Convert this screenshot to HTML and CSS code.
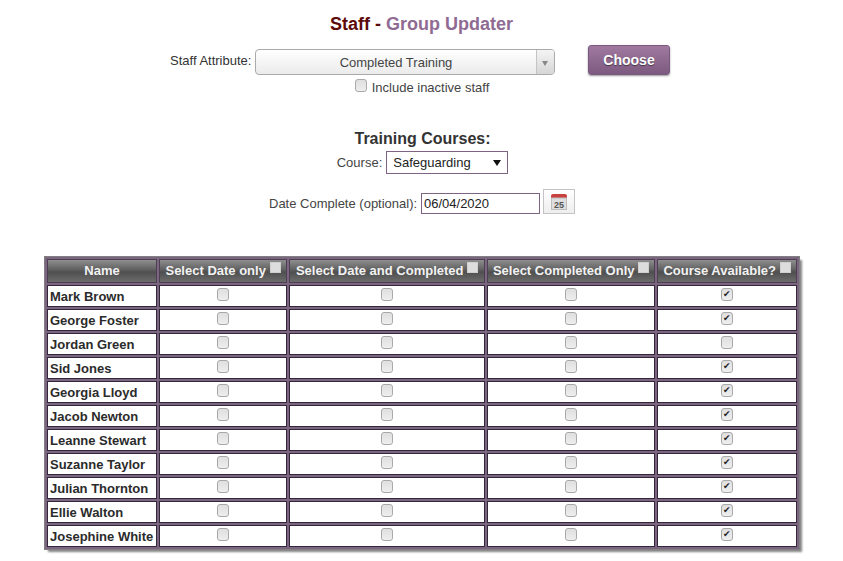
FILE: index.html
```html
<!DOCTYPE html>
<html lang="en">
<head>
    <meta charset="UTF-8">
    <meta name="viewport" content="width=device-width, initial-scale=1.0">
    <title>Staff - Group Updater</title>
    <link rel="stylesheet" href="styles.css">
</head>
<body>
    <h1 class="page-title"><span class="title-dark">Staff - </span><span class="title-light">Group Updater</span></h1>

    <div class="attribute-row">
        <label class="attribute-label">Staff Attribute:</label>
        <div class="combo">
            <span class="combo-text">Completed Training</span>
            <span class="combo-arrow"></span>
        </div>
        <button class="choose-btn">Choose</button>
    </div>
    <div class="inactive-row">
        <input type="checkbox" class="check">
        <span>Include inactive staff</span>
    </div>

    <h2 class="section-title">Training Courses:</h2>
    <div class="course-row">
        <label>Course:</label>
        <div class="course-select">
            <span>Safeguarding</span>
            <span class="course-arrow"></span>
        </div>
    </div>
    <div class="date-row">
        <label>Date Complete (optional):</label>
        <input type="text" class="date-input" value="06/04/2020">
        <button class="cal-btn">
            <svg width="16" height="17" viewBox="0 0 16 17">
                <path d="M0 3a2 2 0 0 1 2-2h12a2 2 0 0 1 2 2v2H0z" fill="#c9413f"/>
                <rect x="0.5" y="5" width="15" height="11.5" fill="#dedede" stroke="#bdbdbd"/>
                <text x="8" y="14.5" class="cal-day">25</text>
            </svg>
        </button>
    </div>

    <table class="staff-table">
        <thead>
            <tr>
                <th class="col-name">Name</th>
                <th class="col-date">Select Date only <input type="checkbox" class="head-check"></th>
                <th class="col-both">Select Date and Completed <input type="checkbox" class="head-check"></th>
                <th class="col-done">Select Completed Only <input type="checkbox" class="head-check"></th>
                <th class="col-avail">Course Available? <input type="checkbox" class="head-check"></th>
            </tr>
        </thead>
        <tbody id="rows"></tbody>
    </table>

    <script>
        const staff = [
            ['Mark Brown', true], ['George Foster', true], ['Jordan Green', false],
            ['Sid Jones', true], ['Georgia Lloyd', true], ['Jacob Newton', true],
            ['Leanne Stewart', true], ['Suzanne Taylor', true], ['Julian Thornton', true],
            ['Ellie Walton', true], ['Josephine White', true]
        ];
        const box = (on) => `<td class="tick"><input type="checkbox" class="check"${on ? ' checked' : ''}></td>`;
        document.getElementById('rows').innerHTML = staff.map(([name, avail]) =>
            `<tr><td class="name">${name}</td>${box(false)}${box(false)}${box(false)}${box(avail)}</tr>`
        ).join('');
    </script>
</body>
</html>
```

FILE: styles.css
```css
* {
    box-sizing: border-box;
    font-family: 'Liberation Sans', Arial, sans-serif;
}

body {
    margin: 0;
    background: #ffffff;
    color: #333333;
    font-size: 13px;
    height: 561px;
    overflow: hidden;
}

.page-title {
    margin: 0;
    padding-top: 14px;
    height: 45px;
    text-align: center;
    font-size: 18px;
    line-height: 21px;
    font-weight: bold;
}

.title-dark {
    color: #5c0a0a;
}

.title-light {
    color: #8f6b93;
}

.attribute-row {
    display: flex;
    align-items: flex-start;
    padding-left: 170px;
    height: 33px;
}

.attribute-label {
    width: 85px;
    line-height: 31px;
    white-space: nowrap;
}

.combo {
    display: flex;
    width: 300px;
    height: 26px;
    margin-top: 4px;
    border: 1px solid #aaaaaa;
    border-radius: 4px;
    background: linear-gradient(#ffffff, #ebebeb);
}

.combo-text {
    flex: 1;
    text-align: center;
    line-height: 25px;
    color: #444444;
}

.combo-arrow {
    position: relative;
    width: 18px;
    border-left: 1px solid #c4c4c4;
    background: linear-gradient(#f4f4f4, #d6d6d6);
    border-radius: 0 3px 3px 0;
}

.combo-arrow::after {
    content: "";
    position: absolute;
    left: 5px;
    top: 11px;
    border: 3px solid transparent;
    border-top: 5px solid #888888;
}

.choose-btn {
    width: 82px;
    height: 30px;
    margin-left: 33px;
    padding: 0;
    border: 1px solid #79597f;
    border-radius: 3px;
    background: linear-gradient(#a0799f, #7d5a80);
    color: #ffffff;
    font-size: 14px;
    font-weight: bold;
    text-shadow: 0 1px 1px rgba(0, 0, 0, 0.5);
    box-shadow: 0 1px 2px rgba(0, 0, 0, 0.4);
}

.inactive-row {
    display: flex;
    justify-content: center;
    align-items: center;
    gap: 5px;
    height: 18px;
    padding-left: 1px;
    color: #444444;
}

.check,
.head-check {
    appearance: none;
    position: relative;
    display: inline-block;
    margin: 0;
    width: 12px;
    height: 13px;
    border: 1px solid #a9a9a9;
    border-radius: 3px;
    background: linear-gradient(#dfdfdf, #eeeeee);
}

.inactive-row .check {
    margin-top: -3px;
}

.check:checked::after {
    content: "\2714";
    position: absolute;
    left: 1px;
    top: 0;
    font-family: 'DejaVu Sans', sans-serif;
    font-size: 9px;
    line-height: 11px;
    color: #222222;
}

.head-check {
    width: 11px;
    height: 11px;
    vertical-align: 2px;
    border-color: #cfcfcf;
    border-radius: 0;
    background: #dddddd;
}

.section-title {
    margin: 33px 0 0;
    padding-left: 2px;
    text-align: center;
    font-size: 16px;
    line-height: 19px;
    font-weight: bold;
}

.course-row {
    display: flex;
    justify-content: center;
    align-items: center;
    gap: 4px;
    height: 23px;
    margin-top: 3px;
    padding-left: 2px;
    color: #444444;
}

.course-select {
    display: flex;
    justify-content: space-between;
    align-items: center;
    width: 122px;
    height: 23px;
    padding: 0 6px;
    border: 1px solid #7f6384;
    color: #222222;
}

.course-arrow {
    border: 4px solid transparent;
    border-top: 6px solid #111111;
    border-bottom: 0;
}

.date-row {
    display: flex;
    align-items: center;
    height: 26px;
    margin-top: 16px;
    padding-left: 269px;
    color: #444444;
}

.date-row label {
    width: 152px;
    white-space: nowrap;
}

.date-input {
    width: 119px;
    height: 21px;
    padding: 0 2px;
    border: 1px solid #7f6384;
    font-size: 13px;
    color: #222222;
}

.cal-btn {
    display: flex;
    align-items: center;
    justify-content: center;
    width: 32px;
    height: 25px;
    margin: 0 0 4px 3px;
    padding: 0;
    border: 1px solid #c4c4c4;
    background: linear-gradient(#ffffff, #eeeeee);
}

.cal-day {
    font-size: 9px;
    font-weight: bold;
    fill: #555555;
    text-anchor: middle;
}

.staff-table {
    table-layout: fixed;
    width: 754px;
    margin: 41px 0 0 45px;
    border-collapse: separate;
    border-spacing: 2px;
    background: #7b6580;
    box-shadow: 0 0 0 1px #808080, 3px 3px 2px #858585;
}

.staff-table th {
    height: 24px;
    padding: 0 0 2px;
    border: 1px solid #4d3f52;
    background: linear-gradient(#8e8e8e, #5f5f5f 45%, #4f4f4f 55%, #6c6c6c);
    color: #f2f2f2;
    font-weight: bold;
    white-space: nowrap;
}

.col-name { width: 110px; }
.col-date { width: 128px; }
.col-both { width: 196px; }
.col-done { width: 168px; }
.col-avail { width: 140px; }

.staff-table td {
    height: 22px;
    padding: 0;
    border: 1px solid #33283a;
    background: #ffffff;
}

.staff-table .name {
    padding-left: 2px;
    font-weight: bold;
    color: #2b2b2b;
    white-space: nowrap;
}

.tick {
    text-align: center;
    line-height: 14px;
}
```
